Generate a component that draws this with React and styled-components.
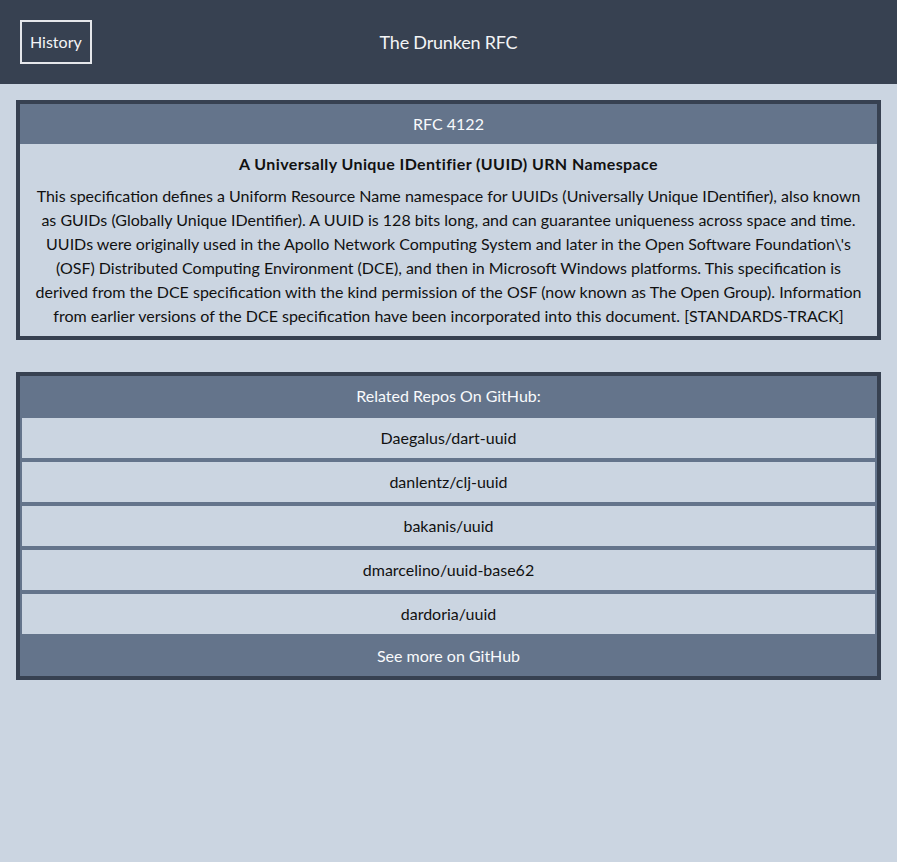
import React from "react";
import styled, { createGlobalStyle } from "styled-components";

const Global = createGlobalStyle`
  html, body { margin: 0; padding: 0; }
  body {
    background: #cbd5e1;
    font-family: "Segoe UI", Lato, "Liberation Sans", sans-serif;
    font-size: 16px;
    line-height: 24px;
    color: #111;
  }
`;

const Header = styled.header`
  height: 84px;
  background: #374151;
  display: grid;
  grid-template-columns: 1fr auto 1fr;
  align-items: center;
  padding: 0 20px;
  box-sizing: border-box;
`;

const HistoryButton = styled.button`
  justify-self: start;
  height: 44px;
  padding: 0 8px;
  background: transparent;
  border: 2px solid #e5e7eb;
  color: #f3f4f6;
  font: inherit;
  font-size: 16px;
  cursor: pointer;
`;

const Title = styled.div`
  color: #f3f4f6;
  font-size: 18px;
  letter-spacing: -0.2px;
`;

const Main = styled.main`
  padding: 16px;
  display: flex;
  flex-direction: column;
  gap: 32px;
`;

const Card = styled.section`
  border: 4px solid #374151;
  background: #cbd5e1;
`;

const CardHead = styled.div`
  background: #64748b;
  color: #f8fafc;
  height: 40px;
  display: flex;
  align-items: center;
  justify-content: center;
`;

const CardBody = styled.div`
  padding: 8px 12px;
  text-align: center;
`;

const RfcTitle = styled.h2`
  margin: 0 0 8px;
  font-size: 16px;
  font-weight: 700;
  line-height: 24px;
  letter-spacing: 0.4px;
`;

const Abstract = styled.p`
  margin: 0;
`;

const RepoRow = styled.a`
  display: flex;
  align-items: center;
  justify-content: center;
  height: 40px;
  border: 2px solid #64748b;
  background: #cbd5e1;
  color: #111;
  text-decoration: none;
`;

const repos = [
  "Daegalus/dart-uuid",
  "danlentz/clj-uuid",
  "bakanis/uuid",
  "dmarcelino/uuid-base62",
  "dardoria/uuid",
];

export default function App() {
  return (
    <>
      <Global />
      <Header>
        <HistoryButton>History</HistoryButton>
        <Title>The Drunken RFC</Title>
        <span />
      </Header>
      <Main>
        <Card>
          <CardHead>RFC 4122</CardHead>
          <CardBody>
            <RfcTitle>A Universally Unique IDentifier (UUID) URN Namespace</RfcTitle>
            <Abstract>
              This specification defines a Uniform Resource Name namespace for UUIDs (Universally Unique IDentifier), also known as GUIDs (Globally Unique IDentifier). A UUID is 128 bits long, and can guarantee uniqueness across space and time. UUIDs were originally used in the Apollo Network Computing System and later in the Open Software Foundation\'s (OSF) Distributed Computing Environment (DCE), and then in Microsoft Windows platforms. This specification is derived from the DCE specification with the kind permission of the OSF (now known as The Open Group). Information from earlier versions of the DCE specification have been incorporated into this document. [STANDARDS-TRACK]
            </Abstract>
          </CardBody>
        </Card>
        <Card>
          <CardHead>Related Repos On GitHub:</CardHead>
          {repos.map((r) => (
            <RepoRow key={r} href="#">{r}</RepoRow>
          ))}
          <CardHead>See more on GitHub</CardHead>
        </Card>
      </Main>
    </>
  );
}
